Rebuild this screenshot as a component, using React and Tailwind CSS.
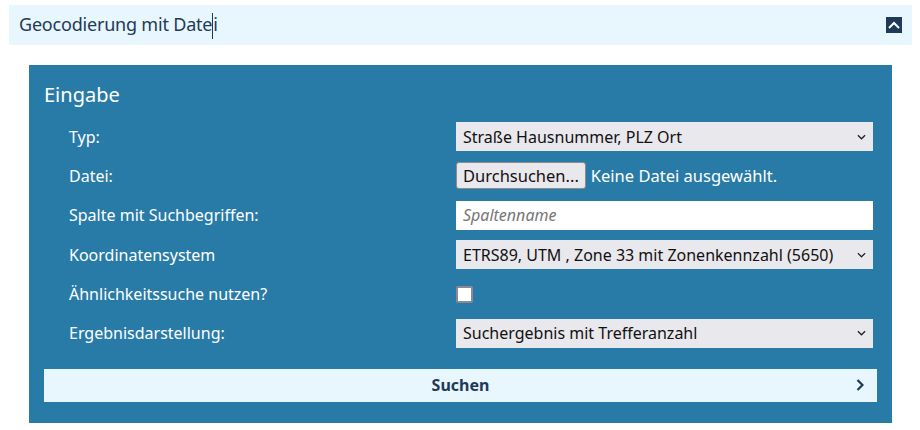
import React from "react";

const font = { fontFamily: '"Noto Sans", "Open Sans", sans-serif' };

function Chevron({ className }) {
  return (
    <svg viewBox="0 0 10 6" className={className} fill="none" stroke="currentColor" strokeWidth="1.4">
      <path d="M1 1l4 4 4-4" />
    </svg>
  );
}

function SelectBox({ children }) {
  return (
    <div className="flex h-[29px] items-center justify-between bg-[#e9e8ed] pl-[7px] pr-[7px] text-[16px] text-[#111]">
      <span className="whitespace-nowrap">{children}</span>
      <Chevron className="h-[6px] w-[9px] text-[#222]" />
    </div>
  );
}

function Row({ label, children }) {
  return (
    <div className="grid grid-cols-[412px_417px] items-center">
      <div className="pl-[25px] text-[16px] text-white">{label}</div>
      <div>{children}</div>
    </div>
  );
}

export default function App() {
  return (
    <div className="w-[920px] h-[430px] bg-white pt-[5px] pl-[9px]" style={font}>
      <div className="flex h-[40px] w-[903px] items-center justify-between bg-[#e8f6fd] pl-[10px] pr-[10px]">
        <span className="text-[18px] text-[#233a56] tracking-[-0.2px]">
          Geocodierung mit Date
          <span className="inline-block h-[26px] w-px bg-[#233a56] align-middle" />
          i
        </span>
        <button className="flex h-4 w-4 items-center justify-center bg-[#1f3a58]">
          <svg viewBox="0 0 12 8" className="h-[8px] w-[12px]" fill="none" stroke="white" strokeWidth="2">
            <path d="M1 7l5-5 5 5" />
          </svg>
        </button>
      </div>

      <div className="mt-[20px] ml-[20px] w-[863px] bg-[#297ba7] px-[15px] pt-[17px] pb-[21px]">
        <h2 className="text-[20px] leading-[26px] text-white">Eingabe</h2>
        <div className="mt-[14px] flex flex-col gap-[10.4px]">
          <Row label="Typ:">
            <SelectBox>Straße Hausnummer, PLZ Ort</SelectBox>
          </Row>
          <Row label="Datei:">
            <div className="flex h-[29px] items-center gap-[5px]">
              <button className="h-[27px] rounded-[3px] border border-[#8d8d8d] bg-[#e9e8ed] px-[6px] text-[16.5px] text-[#111]">
                Durchsuchen...
              </button>
              <span className="text-[16.5px] text-white">Keine Datei ausgewählt.</span>
            </div>
          </Row>
          <Row label="Spalte mit Suchbegriffen:">
            <div className="flex h-[29px] items-center bg-white pl-[7px] text-[16px] italic text-[#777]">
              Spaltenname
            </div>
          </Row>
          <Row label="Koordinatensystem">
            <SelectBox>ETRS89, UTM , Zone 33 mit Zonenkennzahl (5650)</SelectBox>
          </Row>
          <Row label="Ähnlichkeitssuche nutzen?">
            <div className="flex h-[29px] items-center">
              <span className="block h-[17px] w-[17px] rounded-[2px] border-2 border-[#8a8a95] bg-white" />
            </div>
          </Row>
          <Row label="Ergebnisdarstellung:">
            <SelectBox>Suchergebnis mit Trefferanzahl</SelectBox>
          </Row>
        </div>
        <button className="relative mt-[21px] flex h-[33px] w-full items-center justify-center bg-[#e8f6fd] text-[16px] font-bold text-[#1f3a58]">
          Suchen
          <svg viewBox="0 0 8 12" className="absolute right-[13px] h-[12px] w-[8px]" fill="none" stroke="#1f3a58" strokeWidth="2.2">
            <path d="M1.5 1l5 5-5 5" />
          </svg>
        </button>
      </div>
    </div>
  );
}
